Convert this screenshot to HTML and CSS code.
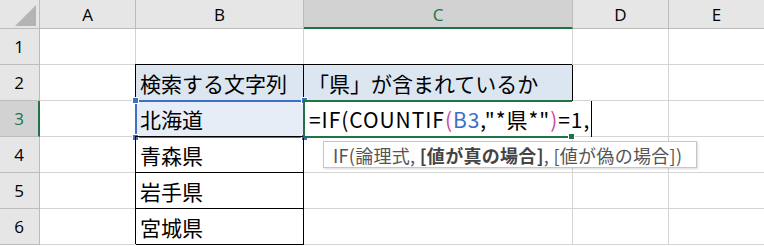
FILE: index.html
```html
<!DOCTYPE html>
<html>
<head>
  <meta charset="UTF-8">
  <link rel="stylesheet" href="styles.css">
</head>
<body>
  <div class="sheet">
    <!-- header row -->
    <div class="corner">
      <svg width="21" height="21" viewBox="0 0 21 21"><polygon points="0,21 21,21 21,0" fill="#b4b4b4"/></svg>
    </div>
    <div class="col-head">A</div>
    <div class="col-head">B</div>
    <div class="col-head active">C</div>
    <div class="col-head">D</div>
    <div class="col-head">E</div>

    <div class="row-head">1</div>
    <div class="cell"></div>
    <div class="cell"></div>
    <div class="cell"></div>
    <div class="cell"></div>
    <div class="cell"></div>

    <div class="row-head">2</div>
    <div class="cell"></div>
    <div class="cell boxed title">検索する文字列</div>
    <div class="cell boxed title">「県」が含まれているか</div>
    <div class="cell"></div>
    <div class="cell"></div>

    <div class="row-head active">3</div>
    <div class="cell"></div>
    <div class="cell boxed ref-cell">北海道
      <div class="ref-frame">
        <span class="handle tl"></span>
        <span class="handle tr"></span>
        <span class="handle bl"></span>
        <span class="handle br"></span>
      </div>
    </div>
    <div class="cell editing">
      <span class="formula">=IF(COUNTIF<span class="paren">(</span><span class="ref">B3</span>,"*県*"<span class="paren">)</span>=1,</span>
      <div class="tip">IF(論理式, <b>[値が真の場合]</b>, [値が偽の場合])</div>
    </div>
    <div class="cell"></div>
    <div class="cell"></div>

    <div class="row-head">4</div>
    <div class="cell"></div>
    <div class="cell boxed">青森県</div>
    <div class="cell"></div>
    <div class="cell"></div>
    <div class="cell"></div>

    <div class="row-head">5</div>
    <div class="cell"></div>
    <div class="cell boxed">岩手県</div>
    <div class="cell"></div>
    <div class="cell"></div>
    <div class="cell"></div>

    <div class="row-head">6</div>
    <div class="cell"></div>
    <div class="cell boxed">宮城県</div>
    <div class="cell"></div>
    <div class="cell"></div>
    <div class="cell"></div>
  </div>
</body>
</html>
```

FILE: styles.css
```css
body {
  margin: 0;
  background: #fff;
  overflow: hidden;
  font-family: "Noto Sans CJK JP", "Noto Sans", sans-serif;
}
.sheet {
  display: grid;
  grid-template-columns: 40px 96px 168px 269px 96px 96px;
  grid-template-rows: 29px repeat(6, 36px);
  width: 765px;
}
.sheet > div {
  box-sizing: border-box;
  border-right: 1px solid #d4d4d4;
  border-bottom: 1px solid #d4d4d4;
}
.corner {
  background: #e6e6e6;
  display: flex;
  justify-content: flex-end;
  align-items: flex-end;
  padding: 0 3px 2px 0;
}
.sheet > .corner,
.sheet > .col-head,
.sheet > .row-head {
  border-color: #bcbcbc;
}
.col-head {
  background: #e6e6e6;
  color: #000;
  font-family: "Open Sans", "Noto Sans", sans-serif;
  font-size: 17px;
  display: flex;
  align-items: center;
  justify-content: center;
  padding-top: 1px;
}
.row-head {
  background: #e6e6e6;
  color: #000;
  font-family: "Open Sans", "Noto Sans", sans-serif;
  font-size: 17px;
  display: flex;
  align-items: center;
  justify-content: center;
  padding-right: 1px;
}
.sheet > .col-head.active {
  background: #d2d2d2;
  color: #217346;
  border-bottom: 2px solid #217346;
  padding-top: 2px;
}
.sheet > .row-head.active {
  background: #d2d2d2;
  color: #217346;
  border-right: 2px solid #217346;
  padding-right: 0;
}
.cell {
  font-size: 21px;
  color: #000;
  display: flex;
  align-items: center;
  padding: 1px 0 0 4px;
  white-space: nowrap;
}
.sheet > .boxed {
  border-color: #000;
  box-shadow: -1px -1px 0 #000;
  position: relative;
  z-index: 1;
}
.title {
  background: #dce6f1;
}
.ref-cell {
  background: #e7edf7;
}
.ref-frame {
  position: absolute;
  top: -1px;
  left: -1px;
  right: -2px;
  bottom: -2px;
  border: 2px solid #3e6fc6;
}
.handle {
  position: absolute;
  width: 5px;
  height: 5px;
  background: #3e6fc6;
  border: 1px solid #fff;
}
.handle.tl { left: -5px; top: -5px; }
.handle.tr { right: -5px; top: -5px; }
.handle.bl { left: -5px; bottom: -5px; }
.handle.br { right: -5px; bottom: -5px; }
.sheet > .editing {
  position: relative;
  z-index: 3;
  border-right-color: transparent;
  background: #fff;
  padding-left: 5px;
}
.editing:before {
  content: '';
  position: absolute;
  top: -1px;
  left: -1px;
  right: 0;
  bottom: -2px;
  border: 2px solid #217346;
  border-right: none;
}
.editing:after {
  content: '';
  position: absolute;
  right: -3px;
  bottom: -4px;
  width: 5px;
  height: 5px;
  background: #217346;
  border: 1px solid #fff;
}
/* the caret is the right border of the text being typed */
.formula {
  flex-shrink: 0;
  font-size: 21px;
  letter-spacing: 0.95px;
  line-height: 30px;
  padding: 3px 1px 3px 0;
  margin-top: -1px;
  border-right: 1px solid #000;
  position: relative;
  z-index: 1;
}
.paren {
  color: #cc4a9e;
}
.ref {
  color: #3e6fc6;
}
.tip {
  position: absolute;
  left: 19px;
  top: 40px;
  width: 374px;
  height: 27px;
  box-sizing: border-box;
  background: #fff;
  border: 1px solid #c6c6c6;
  box-shadow: 1px 1px 2px rgba(0, 0, 0, 0.15);
  color: #555;
  font-size: 18px;
  letter-spacing: 0.3px;
  padding: 0 0 0 9px;
  display: flex;
  align-items: center;
  white-space: pre;
}
.tip b {
  color: #444;
}
```
